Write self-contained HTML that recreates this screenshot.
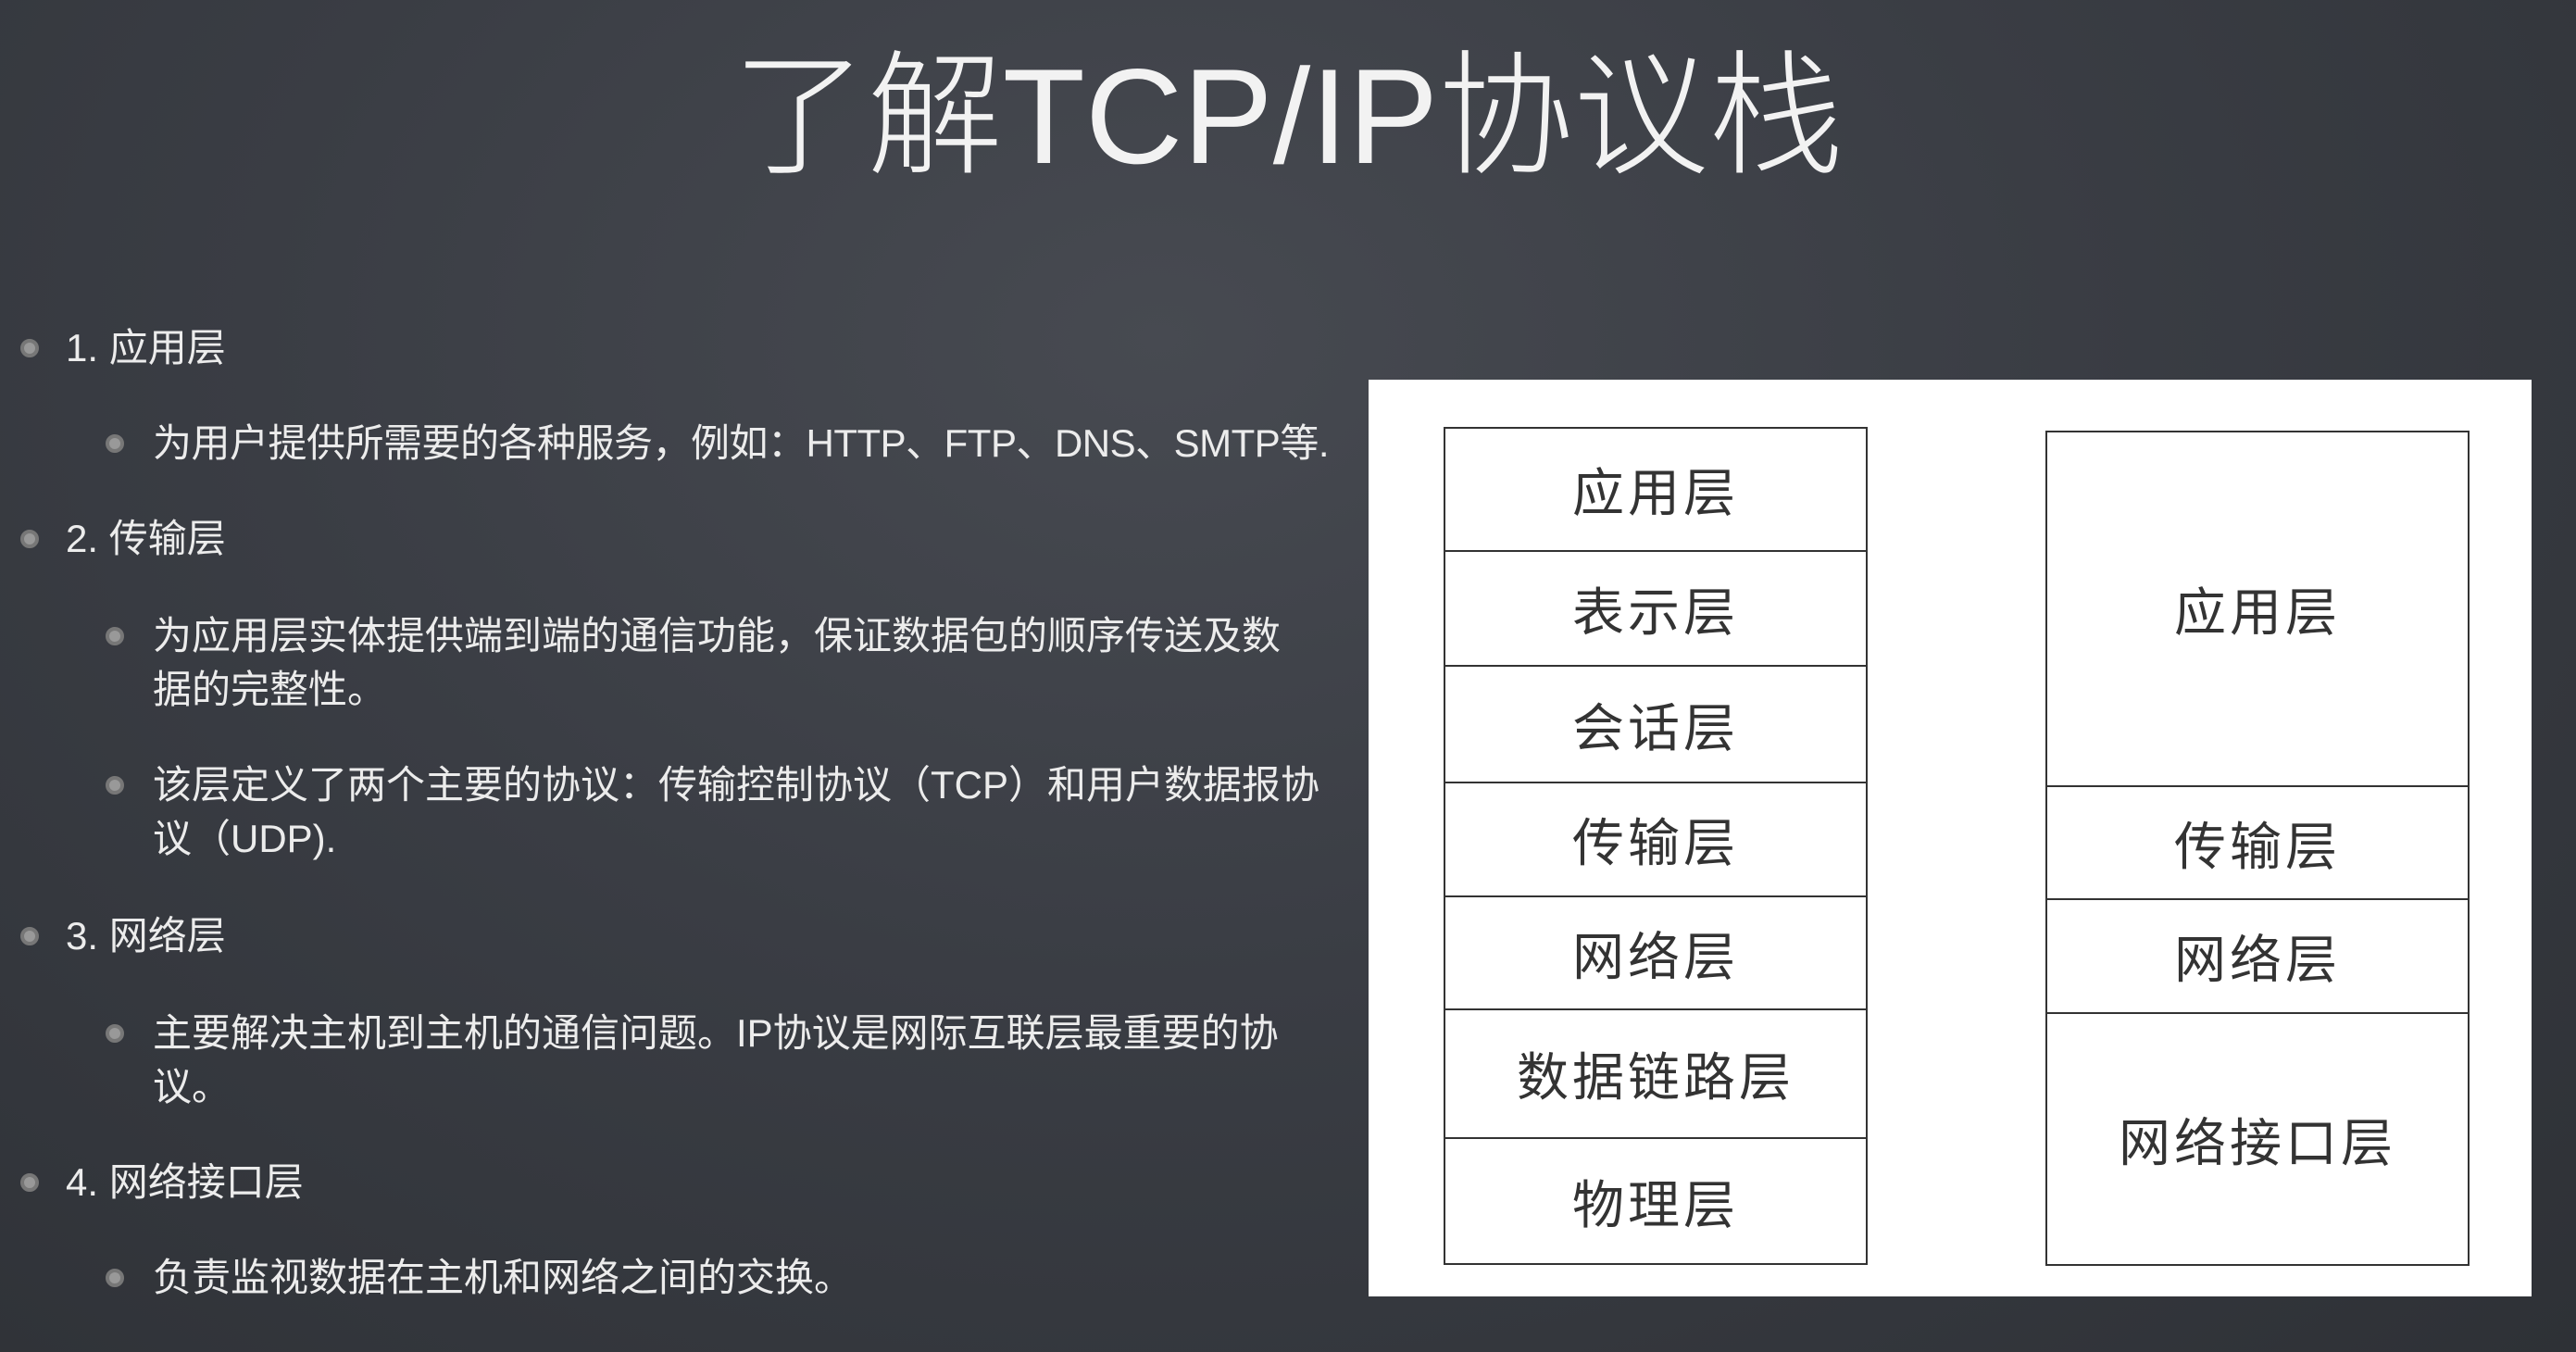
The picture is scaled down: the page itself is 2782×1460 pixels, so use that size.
<!DOCTYPE html>
<html><head><meta charset="utf-8"><style>
html,body{margin:0;padding:0}
body{width:2782px;height:1460px;position:relative;overflow:hidden;
background:radial-gradient(ellipse at 45% 25%,#474a51 0%,#3a3d44 45%,#2e3136 100%);
font-family:"Liberation Sans","Noto Sans CJK SC",sans-serif;color:#ececec}
.t{position:absolute;white-space:nowrap}
h1{position:absolute;left:0;width:2782px;top:36px;margin:0;text-align:center;font-weight:300;font-size:146px;color:#f2f2f2;letter-spacing:0;line-height:180px}
.b{position:absolute;width:20px;height:20px;border-radius:50%;background:#999;border:4px solid #777;box-sizing:border-box}
.l{font-size:42px;line-height:58px}
.box{position:absolute;left:1478px;top:410px;width:1256px;height:990px;background:#fff}
.c{position:absolute;border:2px solid #333;box-sizing:border-box;display:flex;align-items:center;justify-content:center;font-size:56px;color:#333;letter-spacing:4px}
</style></head><body>
<h1>了解TCP/IP协议栈</h1>

<div class="b" style="left:22px;top:366px"></div><div class="t l" style="left:71px;top:347px">1. 应用层</div>
<div class="b" style="left:114px;top:469px"></div><div class="t l" style="left:165px;top:450px;letter-spacing:-0.5px">为用户提供所需要的各种服务，例如：HTTP、FTP、DNS、SMTP等.</div>
<div class="b" style="left:22px;top:572px"></div><div class="t l" style="left:71px;top:553px">2. 传输层</div>
<div class="b" style="left:114px;top:677px"></div><div class="t l" style="left:165px;top:658px">为应用层实体提供端到端的通信功能，保证数据包的顺序传送及数<br>据的完整性。</div>
<div class="b" style="left:114px;top:838px"></div><div class="t l" style="left:165px;top:819px">该层定义了两个主要的协议：传输控制协议（TCP）和用户数据报协<br>议（UDP).</div>
<div class="b" style="left:22px;top:1001px"></div><div class="t l" style="left:71px;top:982px">3. 网络层</div>
<div class="b" style="left:114px;top:1106px"></div><div class="t l" style="left:165px;top:1087px">主要解决主机到主机的通信问题。IP协议是网际互联层最重要的协<br>议。</div>
<div class="b" style="left:22px;top:1267px"></div><div class="t l" style="left:71px;top:1248px">4. 网络接口层</div>
<div class="b" style="left:114px;top:1370px"></div><div class="t l" style="left:165px;top:1351px">负责监视数据在主机和网络之间的交换。</div>

<div class="box"></div>
<div class="c" style="left:1559px;top:461px;width:458px;height:135px">应用层</div>
<div class="c" style="left:1559px;top:594px;width:458px;height:126px">表示层</div>
<div class="c" style="left:1559px;top:718px;width:458px;height:128px">会话层</div>
<div class="c" style="left:1559px;top:844px;width:458px;height:125px">传输层</div>
<div class="c" style="left:1559px;top:967px;width:458px;height:124px">网络层</div>
<div class="c" style="left:1559px;top:1089px;width:458px;height:141px">数据链路层</div>
<div class="c" style="left:1559px;top:1228px;width:458px;height:138px">物理层</div>

<div class="c" style="left:2209px;top:465px;width:458px;height:385px">应用层</div>
<div class="c" style="left:2209px;top:848px;width:458px;height:124px">传输层</div>
<div class="c" style="left:2209px;top:970px;width:458px;height:125px">网络层</div>
<div class="c" style="left:2209px;top:1093px;width:458px;height:274px">网络接口层</div>
</body></html>
